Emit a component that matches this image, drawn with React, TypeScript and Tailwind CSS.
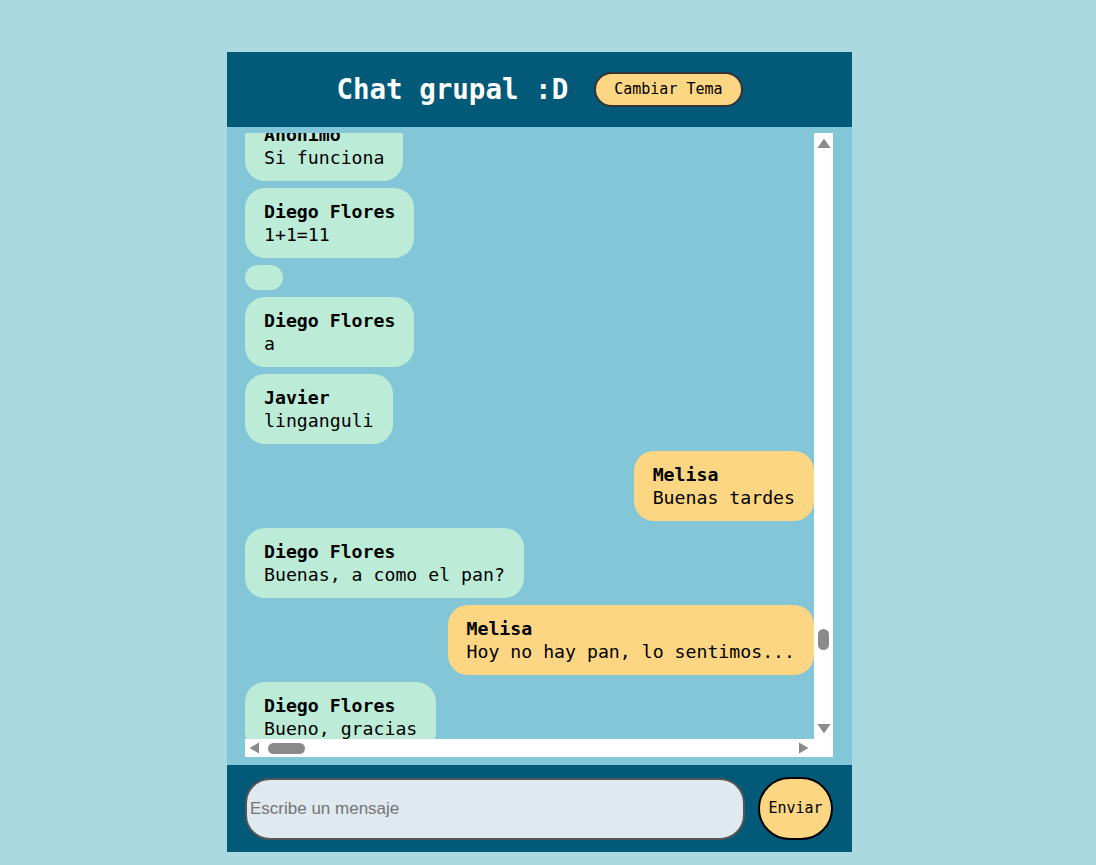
import React from "react";

type Msg = { name: string; text: string; mine?: boolean };

const messages: Msg[] = [
  { name: "Anonimo", text: "Si funciona" },
  { name: "Diego Flores", text: "1+1=11" },
  { name: "", text: "" },
  { name: "Diego Flores", text: "a" },
  { name: "Javier", text: "linganguli" },
  { name: "Melisa", text: "Buenas tardes", mine: true },
  { name: "Diego Flores", text: "Buenas, a como el pan?" },
  { name: "Melisa", text: "Hoy no hay pan, lo sentimos...", mine: true },
  { name: "Diego Flores", text: "Bueno, gracias" },
];

const mono = "font-['DejaVu_Sans_Mono','Liberation_Mono',monospace]";

const Bubble: React.FC<{ m: Msg; first?: boolean }> = ({ m, first }) => {
  if (!m.name && !m.text) {
    return <div className="h-[25px] w-[38px] shrink-0 rounded-[13px] bg-[#bcecd7]" />;
  }
  return (
    <div
      className={`shrink-0 rounded-[20px] px-[19px] py-3 text-[18.2px] leading-[23px] text-black whitespace-nowrap ${
        m.mine ? "self-end bg-[#fcd683]" : "self-start bg-[#bcecd7]"
      } ${first ? "-mt-[22px]" : ""}`}
    >
      <div className="font-bold">{m.name}</div>
      <div>{m.text}</div>
    </div>
  );
};

// scrollbars drawn as in the capture (classic arrows, pill thumbs)
const VScroll = () => (
  <svg width="19" height="606" className="shrink-0 bg-white">
    <polygon points="10,5.5 3.5,15 16.5,15" fill="#8a8a8a" />
    <rect x="4" y="496" width="11" height="21" rx="5.5" fill="#8a8a8a" />
    <polygon points="3.5,591 16.5,591 10,600.5" fill="#8a8a8a" />
  </svg>
);

const HScroll = () => (
  <svg width="569" height="18" className="shrink-0 bg-white">
    <polygon points="4.5,9 14,3.5 14,14.5" fill="#8a8a8a" />
    <rect x="23" y="4" width="37" height="11" rx="5.5" fill="#8a8a8a" />
    <polygon points="554,3.5 554,14.5 563.5,9" fill="#8a8a8a" />
  </svg>
);

export default function App() {
  return (
    <div className="min-h-screen bg-[#aad9e0] pt-[52px] pb-[13px]">
      <div className={`ml-[227px] w-[625px] ${mono}`}>
        <header className="flex h-[75px] items-center justify-center gap-[26px] bg-[#035a78]">
          <h1 className="text-[27.5px] font-bold text-white">Chat grupal :D</h1>
          <button className="h-[35px] rounded-full border-2 border-[#333] bg-[#fcd683] px-[18px] text-[15px] text-black">
            Cambiar Tema
          </button>
        </header>

        <section className="h-[638px] bg-[#83c6d7] pl-[18px] pr-[19px] pt-[6px] pb-[8px]">
          <div className="flex h-[624px] flex-col">
            <div className="flex h-[606px]">
              <div className="flex flex-1 flex-col gap-[7px] overflow-hidden">
                {messages.map((m, i) => (
                  <Bubble key={i} m={m} first={i === 0} />
                ))}
              </div>
              <VScroll />
            </div>
            <div className="flex h-[18px]">
              <HScroll />
              <div className="w-[19px] bg-white" />
            </div>
          </div>
        </section>

        <footer className="flex h-[87px] items-center gap-[13px] bg-[#035a78] pl-[18px] pr-[19px]">
          <input
            placeholder="Escribe un mensaje"
            className="h-[62px] w-[500px] rounded-[25px] border-2 border-[#555] bg-[#dfe9ef] px-[3px] font-['Liberation_Sans',Arial,sans-serif] text-[17px] text-black placeholder:text-[#757575] outline-none"
          />
          <button className="h-[63px] w-[75px] rounded-full border-2 border-black bg-[#fcd683] text-[15px] text-black">
            Enviar
          </button>
        </footer>
      </div>
    </div>
  );
}
